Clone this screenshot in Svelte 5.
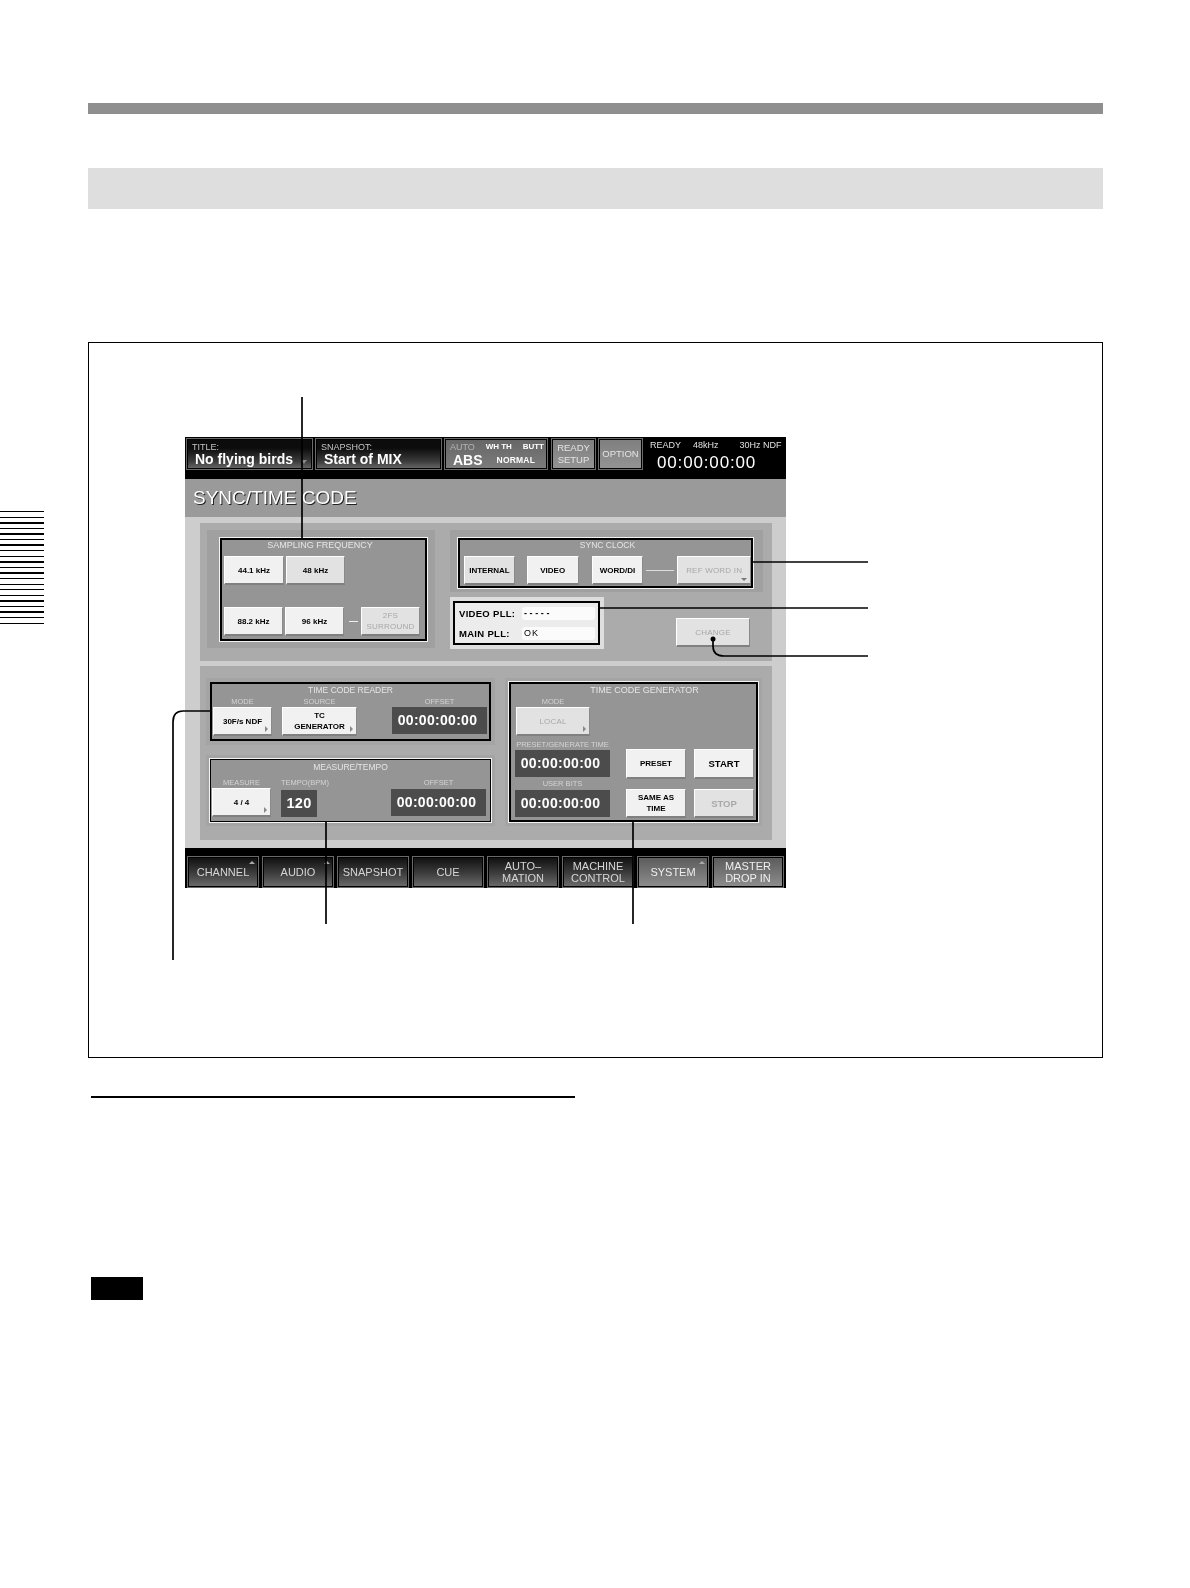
<script>
  const stripes = Array.from({ length: 21 });
  const tabs = [
    { lines: ['CHANNEL'], mark: true },
    { lines: ['AUDIO'], mark: true },
    { lines: ['SNAPSHOT'] },
    { lines: ['CUE'] },
    { lines: ['AUTO–', 'MATION'] },
    { lines: ['MACHINE', 'CONTROL'] },
    { lines: ['SYSTEM'], mark: true, lit: true },
    { lines: ['MASTER', 'DROP IN'], lit: true }
  ];
</script>

<div class="page">
  <div class="tab">
    {#each stripes as _}
      <span class="stripe"></span>
    {/each}
  </div>

  <div class="sheet">
    <div class="bar"></div>
    <div class="band"></div>

    <div class="figure">
      <div class="screen">
        <div class="top">
          <div class="box dark wide">
            <span class="cap">TITLE:</span>
            <span class="name">No flying birds</span>
            <i class="drop"></i>
          </div>
          <div class="box dark wide">
            <span class="cap">SNAPSHOT:</span>
            <span class="name">Start of MIX</span>
          </div>
          <div class="box mid auto">
            <div class="auto-row small"><span class="faint">AUTO</span><b>WH TH</b><b>BUTT</b></div>
            <div class="auto-row"><span class="abs">ABS</span><b class="normal">NORMAL</b></div>
          </div>
          <div class="box lit square">READY<br />SETUP</div>
          <div class="box lit square">OPTION</div>
          <div class="info">
            <div class="info-row"><span>READY</span><span class="khz">48kHz</span><span class="ndf">30Hz NDF</span></div>
            <div class="clock">00:00:00:00</div>
          </div>
        </div>

        <div class="heading">SYNC/TIME CODE</div>

        <div class="body">
          <div class="panel one">
            <div class="halo sampling-halo">
              <div class="frame sampling">
                <div class="frame-title upper">SAMPLING FREQUENCY</div>
                <div class="row first">
                  <button class="btn w60">44.1 kHz</button>
                  <button class="btn w59 on">48 kHz</button>
                </div>
                <div class="row second">
                  <button class="btn w59">88.2 kHz</button>
                  <button class="btn w59">96 kHz</button>
                  <span class="dash"></span>
                  <button class="btn w59 off thin">2FS<br />SURROUND</button>
                </div>
              </div>
            </div>

            <div class="right">
              <div class="halo sync-halo">
                <div class="frame sync">
                  <div class="frame-title upper">SYNC CLOCK</div>
                  <div class="row sync-row">
                    <button class="btn internal on">INTERNAL</button>
                    <button class="btn video">VIDEO</button>
                    <button class="btn word">WORD/DI</button>
                    <span class="link"></span>
                    <button class="btn ref off thin">REF WORD IN<i class="down"></i></button>
                  </div>
                </div>
              </div>
              <div class="row lower">
                <div class="pll-halo">
                  <div class="pll">
                    <div class="pll-row"><b>VIDEO PLL:</b><span class="field dashes">-----</span></div>
                    <div class="pll-row"><b>MAIN PLL:</b><span class="field">OK</span></div>
                  </div>
                </div>
                <button class="btn change off thin">CHANGE</button>
              </div>
            </div>
          </div>

          <div class="panel two">
            <div class="stack">
              <div class="frame plain reader">
                <div class="frame-title">TIME CODE READER</div>
                <div class="cols">
                  <div class="col c1">
                    <span class="lbl">MODE</span>
                    <button class="btn tall">30F/s NDF<i class="more"></i></button>
                  </div>
                  <div class="col c2">
                    <span class="lbl">SOURCE</span>
                    <button class="btn tall">TC<br />GENERATOR<i class="more"></i></button>
                  </div>
                  <div class="col c3">
                    <span class="lbl">OFFSET</span>
                    <div class="time">00:00:00:00</div>
                  </div>
                </div>
              </div>

              <div class="frame plain measure">
                <div class="frame-title">MEASURE/TEMPO</div>
                <div class="cols">
                  <div class="col c1">
                    <span class="lbl">MEASURE</span>
                    <button class="btn tall">4 / 4<i class="more"></i></button>
                  </div>
                  <div class="col tempo">
                    <span class="lbl">TEMPO(BPM)</span>
                    <div class="time short">120</div>
                  </div>
                  <div class="col c3 far">
                    <span class="lbl">OFFSET</span>
                    <div class="time nudge">00:00:00:00</div>
                  </div>
                </div>
              </div>
            </div>

            <div class="frame plain generator">
              <div class="frame-title">TIME CODE GENERATOR</div>
              <div class="col gen-mode">
                <span class="lbl">MODE</span>
                <button class="btn tall off thin">LOCAL<i class="more"></i></button>
              </div>
              <div class="gen-lower">
                <div class="col gen-times">
                  <span class="lbl">PRESET/GENERATE TIME</span>
                  <div class="time">00:00:00:00</div>
                  <span class="lbl second-lbl">USER BITS</span>
                  <div class="time">00:00:00:00</div>
                </div>
                <div class="gen-buttons">
                  <button class="btn">PRESET</button>
                  <button class="btn big">START</button>
                  <button class="btn">SAME AS<br />TIME</button>
                  <button class="btn off big">STOP</button>
                </div>
              </div>
            </div>
          </div>
        </div>

        <div class="foot">
          {#each tabs as t}
            <div class="foot-btn" class:lit={t.lit}>
              {#each t.lines as line}
                <span>{line}</span>
              {/each}
              {#if t.mark}<i class="up"></i>{/if}
            </div>
          {/each}
        </div>
      </div>
    </div>

    <div class="rule"></div>
    <div class="note"></div>
  </div>

  <!-- callout lines sit on top of the screen -->
  <svg class="callouts" width="1190" height="1588" viewBox="0 0 1190 1588" fill="none" stroke="#000" stroke-width="1.7">
    <path d="M302 397V538" />
    <path d="M753 562H868" />
    <path d="M600 608H868" />
    <path d="M713 639V646Q713 656 724 656H868" />
    <circle cx="713" cy="639" r="2.5" fill="#000" stroke="none" />
    <path d="M210 711H183Q173 711 173 722V960" />
    <path d="M326 822V924" />
    <path d="M633 822V924" />
  </svg>
</div>

<style>
  :global(body) {
    margin: 0;
    background: #fff;
  }
  .page {
    position: relative;
    display: flex;
    width: 1190px;
    height: 1588px;
    overflow: hidden;
    font-family: "Liberation Sans", Arial, sans-serif;
  }
  .tab {
    display: flex;
    flex-direction: column;
    justify-content: space-between;
    width: 44px;
    height: 113px;
    margin: 511px 44px 0 0;
  }
  .stripe {
    display: block;
    height: 1.4px;
    background: #000;
  }
  .sheet {
    width: 1015px;
    padding-top: 103px;
  }
  .bar {
    height: 11px;
    background: #8f8f8f;
  }
  .band {
    height: 41px;
    margin-top: 54px;
    background: #dedede;
  }
  .figure {
    box-sizing: border-box;
    height: 716px;
    margin-top: 133px;
    padding: 94px 0 0 96px;
    border: 1px solid #000;
  }
  .rule {
    width: 484px;
    height: 1.5px;
    margin: 38px 0 0 3px;
    background: #000;
  }
  .note {
    width: 52px;
    height: 23px;
    margin: 179.5px 0 0 3px;
    background: #000;
  }
  .callouts {
    position: absolute;
    top: 0;
    left: 0;
    pointer-events: none;
  }

  .screen {
    width: 601px;
    height: 451px;
    filter: blur(0.4px);
  }

  /* top strip */
  .top {
    display: flex;
    box-sizing: border-box;
    height: 42px;
    padding: 1px 0 0 1px;
    gap: 2px;
    background: #000;
    color: #fff;
  }
  .box {
    position: relative;
    box-sizing: border-box;
    height: 32px;
    border: 1px solid #6a6a6a;
    box-shadow: inset 0 0 0 1px #000;
  }
  .dark {
    background: linear-gradient(#0c0c0c 30%, #3c3c3c 75%, #6a6a6a);
  }
  .mid {
    background: linear-gradient(#666, #7c7c7c);
  }
  .lit {
    background: linear-gradient(#7e7e7e, #949494);
  }
  .wide {
    width: 127px;
    padding: 3px 0 0 5px;
  }
  .cap {
    display: block;
    font-size: 9px;
    line-height: 10px;
    color: #c4c4c4;
  }
  .name {
    display: block;
    margin-left: 3px;
    font-size: 14px;
    line-height: 15px;
    font-weight: 700;
    white-space: nowrap;
  }
  .drop {
    position: absolute;
    right: 5px;
    bottom: 5px;
    border: 3px solid transparent;
    border-top: 4px solid #888;
    border-bottom: 0;
  }
  .auto {
    width: 104px;
    margin-right: 1px;
    padding: 3px 3px 0 5px;
  }
  .auto-row {
    display: flex;
    align-items: center;
    height: 17px;
    gap: 14px;
    white-space: nowrap;
  }
  .auto-row.small {
    height: 9px;
    gap: 5px;
    justify-content: space-between;
    font-size: 8px;
  }
  .faint {
    font-size: 9px;
    color: #b4b4b4;
  }
  .abs {
    margin-left: 3px;
    font-size: 14px;
    font-weight: 700;
  }
  .normal {
    font-size: 8.5px;
    letter-spacing: 0.2px;
  }
  .square {
    display: flex;
    align-items: center;
    justify-content: center;
    width: 45px;
    font-size: 9.5px;
    line-height: 12px;
    text-align: center;
    color: #e4e4e4;
  }
  .info {
    width: 136px;
    margin: 2px 0 0 5px;
  }
  .info-row {
    display: flex;
    font-size: 9px;
    line-height: 10px;
    color: #e0e0e0;
  }
  .khz {
    margin-left: 12px;
  }
  .ndf {
    margin-left: 21px;
  }
  .clock {
    margin: 4px 0 0 7px;
    font-size: 17px;
    line-height: 18px;
    letter-spacing: 0.85px;
  }

  .heading {
    box-sizing: border-box;
    height: 38px;
    padding: 8px 0 0 8px;
    background: #9a9a9a;
    color: #fff;
    font-size: 19px;
    line-height: 22px;
    text-shadow: 1px 1px 0 #222;
  }

  .body {
    box-sizing: border-box;
    height: 331px;
    padding: 6px 0 0 15px;
    background: #cdcdcd;
  }
  .panel {
    display: flex;
    box-sizing: border-box;
    width: 572px;
    background: #ababab;
  }
  .one {
    height: 138px;
    padding: 7px 0 0 7px;
  }
  .two {
    height: 174px;
    margin-top: 5px;
    padding: 16px 0 0 10px;
    gap: 18px;
  }

  .halo {
    box-sizing: border-box;
    background: #a0a0a0;
  }
  .sampling-halo {
    width: 228px;
    height: 118px;
    padding: 8px 8px 0 13px;
  }
  .frame {
    box-sizing: border-box;
    background: #959595;
    border: 2px solid #000;
    outline: 1px solid #f2f2f2;
  }
  .frame.plain {
    box-shadow: 0 0 0 4px #a4a4a4;
  }
  .sampling {
    width: 207px;
    height: 103px;
    padding: 0 0 0 2px;
  }
  .frame-title {
    height: 12px;
    font-size: 8.5px;
    line-height: 13px;
    text-align: center;
    color: #e6e6e6;
    white-space: nowrap;
  }
  .frame-title.upper {
    height: 16px;
    line-height: 11px;
  }
  .sampling .frame-title {
    padding-right: 9px;
    font-size: 9px;
  }
  .row {
    display: flex;
    align-items: center;
  }
  .first {
    gap: 2px;
  }
  .second {
    margin-top: 22px;
    gap: 2px;
  }
  .btn {
    position: relative;
    box-sizing: border-box;
    display: flex;
    align-items: center;
    justify-content: center;
    height: 29px;
    margin: 0;
    padding: 0;
    border: 0;
    border-top: 1px solid #fff;
    border-left: 1px solid #fff;
    border-right: 1px solid #8a8a8a;
    border-bottom: 2px solid #808080;
    background: #f1f1f1;
    color: #000;
    font-family: inherit;
    font-size: 8px;
    line-height: 11px;
    font-weight: 700;
    text-align: center;
    white-space: nowrap;
  }
  .btn.on {
    background: #e2e2e2;
  }
  .btn.off {
    background: #e2e2e2;
    color: #a8a8a8;
  }
  .btn.thin {
    font-weight: 400;
    letter-spacing: 0.2px;
  }
  .btn.big {
    font-size: 9.5px;
  }
  .w60 {
    width: 60px;
  }
  .w59 {
    width: 59px;
  }
  .dash {
    width: 9px;
    height: 1px;
    margin: 0 1px 0 3px;
    background: #eee;
  }

  .right {
    margin-left: 15px;
  }
  .sync-halo {
    width: 313px;
    height: 62px;
    padding: 8px 0 0 8px;
  }
  .sync {
    width: 295px;
    height: 50px;
    padding-left: 4px;
  }
  .sync-row {
    gap: 12px;
  }
  .internal {
    width: 51px;
  }
  .video,
  .word {
    width: 52px;
  }
  .word {
    margin-left: 1px;
  }
  .link {
    width: 28px;
    height: 1px;
    margin: 0 -9px;
    background: #ddd;
  }
  .ref {
    width: 74px;
  }
  .down {
    position: absolute;
    right: 3px;
    bottom: 2px;
    border: 3px solid transparent;
    border-top: 3px solid #777;
    border-bottom: 0;
  }
  .lower {
    align-items: flex-start;
    margin-top: 5px;
  }
  .pll-halo {
    box-sizing: border-box;
    width: 154px;
    height: 52px;
    padding: 4px 4px 0 3px;
    background: #dedede;
  }
  .pll {
    box-sizing: border-box;
    width: 147px;
    height: 44px;
    padding: 0 3px 0 4px;
    background: #ececec;
    border: 2px solid #000;
  }
  .pll-row {
    display: flex;
    align-items: center;
    height: 20px;
    font-size: 9.5px;
    letter-spacing: 0.3px;
    color: #000;
    white-space: nowrap;
  }
  .pll-row b {
    width: 63px;
  }
  .field {
    flex: 1;
    padding-left: 2px;
    border-radius: 3px;
    line-height: 13px;
    background: #fbfbfb;
    font-size: 9px;
    letter-spacing: 1px;
  }
  .dashes {
    letter-spacing: 2.6px;
    font-weight: 700;
  }
  .change {
    width: 74px;
    margin: 21px 0 0 72px;
  }

  .stack {
    width: 281px;
  }
  .reader {
    height: 59px;
    outline: 0;
  }
  .measure {
    height: 63px;
    margin-top: 18px;
    border-width: 1px;
    outline-width: 1.5px;
  }
  .measure .frame-title {
    height: 16px;
    line-height: 14px;
  }
  .generator {
    width: 249px;
    height: 140px;
    padding-left: 4px;
  }
  .generator .frame-title {
    padding-left: 18px;
    font-size: 9px;
  }
  .cols {
    display: flex;
    padding-left: 1px;
  }
  .col {
    display: flex;
    flex-direction: column;
  }
  .lbl {
    height: 11px;
    font-size: 7.5px;
    line-height: 11px;
    text-align: center;
    color: #d4d4d4;
    white-space: nowrap;
  }
  .c1 {
    width: 59px;
  }
  .c2 {
    width: 75px;
    margin-left: 10px;
  }
  .c3 {
    width: 95px;
    margin-left: 35px;
  }
  .c3.far {
    margin-left: 74px;
  }
  .tempo {
    width: 36px;
    margin-left: 10px;
  }
  .measure .lbl {
    height: 12px;
    line-height: 14px;
  }
  .tall {
    width: 100%;
  }
  .more {
    position: absolute;
    right: 3px;
    bottom: 2px;
    border: 3px solid transparent;
    border-left: 3px solid #888;
    border-right: 0;
  }
  .time {
    box-sizing: border-box;
    height: 27px;
    padding-right: 4px;
    background: #4c4c4c;
    color: #fff;
    font-size: 14px;
    line-height: 27px;
    font-weight: 700;
    letter-spacing: 0.3px;
    text-align: center;
    white-space: nowrap;
  }
  .short {
    margin-top: 2px;
    padding-right: 0;
    font-size: 14.5px;
  }
  .nudge {
    margin-top: 1px;
  }
  .gen-mode {
    width: 74px;
    margin-left: 1px;
  }
  .gen-lower {
    display: flex;
    margin-top: 3px;
  }
  .gen-times {
    width: 95px;
  }
  .second-lbl {
    height: 13px;
    line-height: 14px;
  }
  .gen-buttons {
    display: grid;
    grid-template-columns: 60px 60px;
    grid-template-rows: 30px 29px;
    column-gap: 8px;
    row-gap: 10px;
    margin: 10px 0 0 16px;
  }
  .gen-buttons .btn {
    width: 100%;
    height: 100%;
  }

  /* bottom strip */
  .foot {
    display: flex;
    box-sizing: border-box;
    height: 40px;
    padding: 8px 0 0 2px;
    gap: 3px;
    background: #000;
  }
  .foot-btn {
    position: relative;
    box-sizing: border-box;
    display: flex;
    flex-direction: column;
    align-items: center;
    justify-content: center;
    width: 72px;
    height: 32px;
    border: 1px solid #6a6a6a;
    box-shadow: inset 0 0 0 1px #000;
    background: linear-gradient(#0e0e0e, #3e3e3e 55%, #6c6c6c);
    color: #d6d6d6;
    font-size: 11px;
    line-height: 12.5px;
  }
  .foot-btn.lit {
    background: linear-gradient(#5a5a5a, #8e8e8e);
    color: #eee;
  }
  .up {
    position: absolute;
    top: 4px;
    right: 3px;
    border: 3px solid transparent;
    border-bottom: 3px solid #aaa;
    border-top: 0;
  }
</style>
